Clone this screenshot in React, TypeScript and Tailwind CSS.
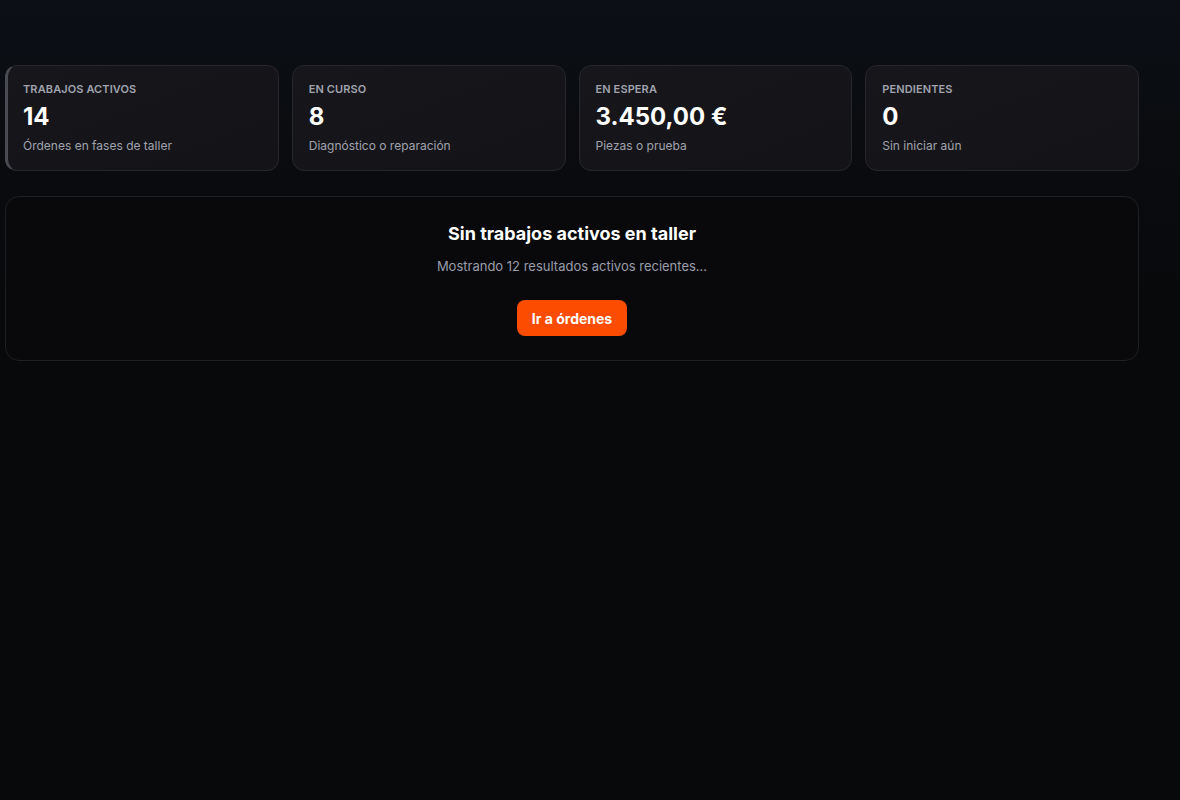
import React from "react";

const stats = [
  { label: "Trabajos activos", value: "14", hint: "Órdenes en fases de taller", accent: true },
  { label: "En curso", value: "8", hint: "Diagnóstico o reparación" },
  { label: "En espera", value: "3.450,00 €", hint: "Piezas o prueba" },
  { label: "Pendientes", value: "0", hint: "Sin iniciar aún" },
];

const StatCard = ({ label, value, hint, accent }: { label: string; value: string; hint: string; accent?: boolean }) => {
  return (
    <div
      className={
        accent
          ? "h-[106px] rounded-xl border border-[#26262c] border-l-[3px] border-l-[#4a4a52] bg-gradient-to-br from-[#17171b] to-[#141418] pl-[15px] pt-[16px]"
          : "h-[106px] rounded-xl border border-[#26262c] bg-gradient-to-br from-[#17171b] to-[#141418] pl-[16px] pt-[16px]"
      }
    >
      <div className="text-[11px] font-semibold uppercase leading-[14px] tracking-[0.01em] text-[#a0a3ad]">{label}</div>
      <div className="mt-[6px] text-[24px] font-bold leading-[30px] text-white">{value}</div>
      <div className="mt-[6px] text-[12px] leading-[16px] text-[#a0a3ad]">{hint}</div>
    </div>
  );
};

export default function App() {
  return (
    <div
      className="min-h-screen bg-[#08090b] bg-[linear-gradient(to_bottom,#0c1016_0px,#0a0c10_120px,#08090b_300px)] pl-[5px] pt-[65px]"
      style={{ fontFamily: "Inter, 'Liberation Sans', sans-serif" }}
    >
      <div className="w-[1134px]">
        <div className="grid grid-cols-4 gap-[13px]">
          {stats.map((s) => (
            <StatCard key={s.label} {...s} />
          ))}
        </div>
        <div className="mt-[25px] flex h-[165px] flex-col items-center rounded-[14px] border border-[#1f1f24] bg-[#09090b] pt-[25px]">
          <h2 className="text-[18px] font-bold leading-[24px] text-white">Sin trabajos activos en taller</h2>
          <p className="mt-[11px] text-[13px] leading-[18px] text-[#9a9daa]">Mostrando 12 resultados activos recientes...</p>
          <button className="mt-[25px] h-[36px] rounded-lg bg-[#fc4c02] px-[15px] text-[14px] font-bold text-white">
            Ir a órdenes
          </button>
        </div>
      </div>
    </div>
  );
}
